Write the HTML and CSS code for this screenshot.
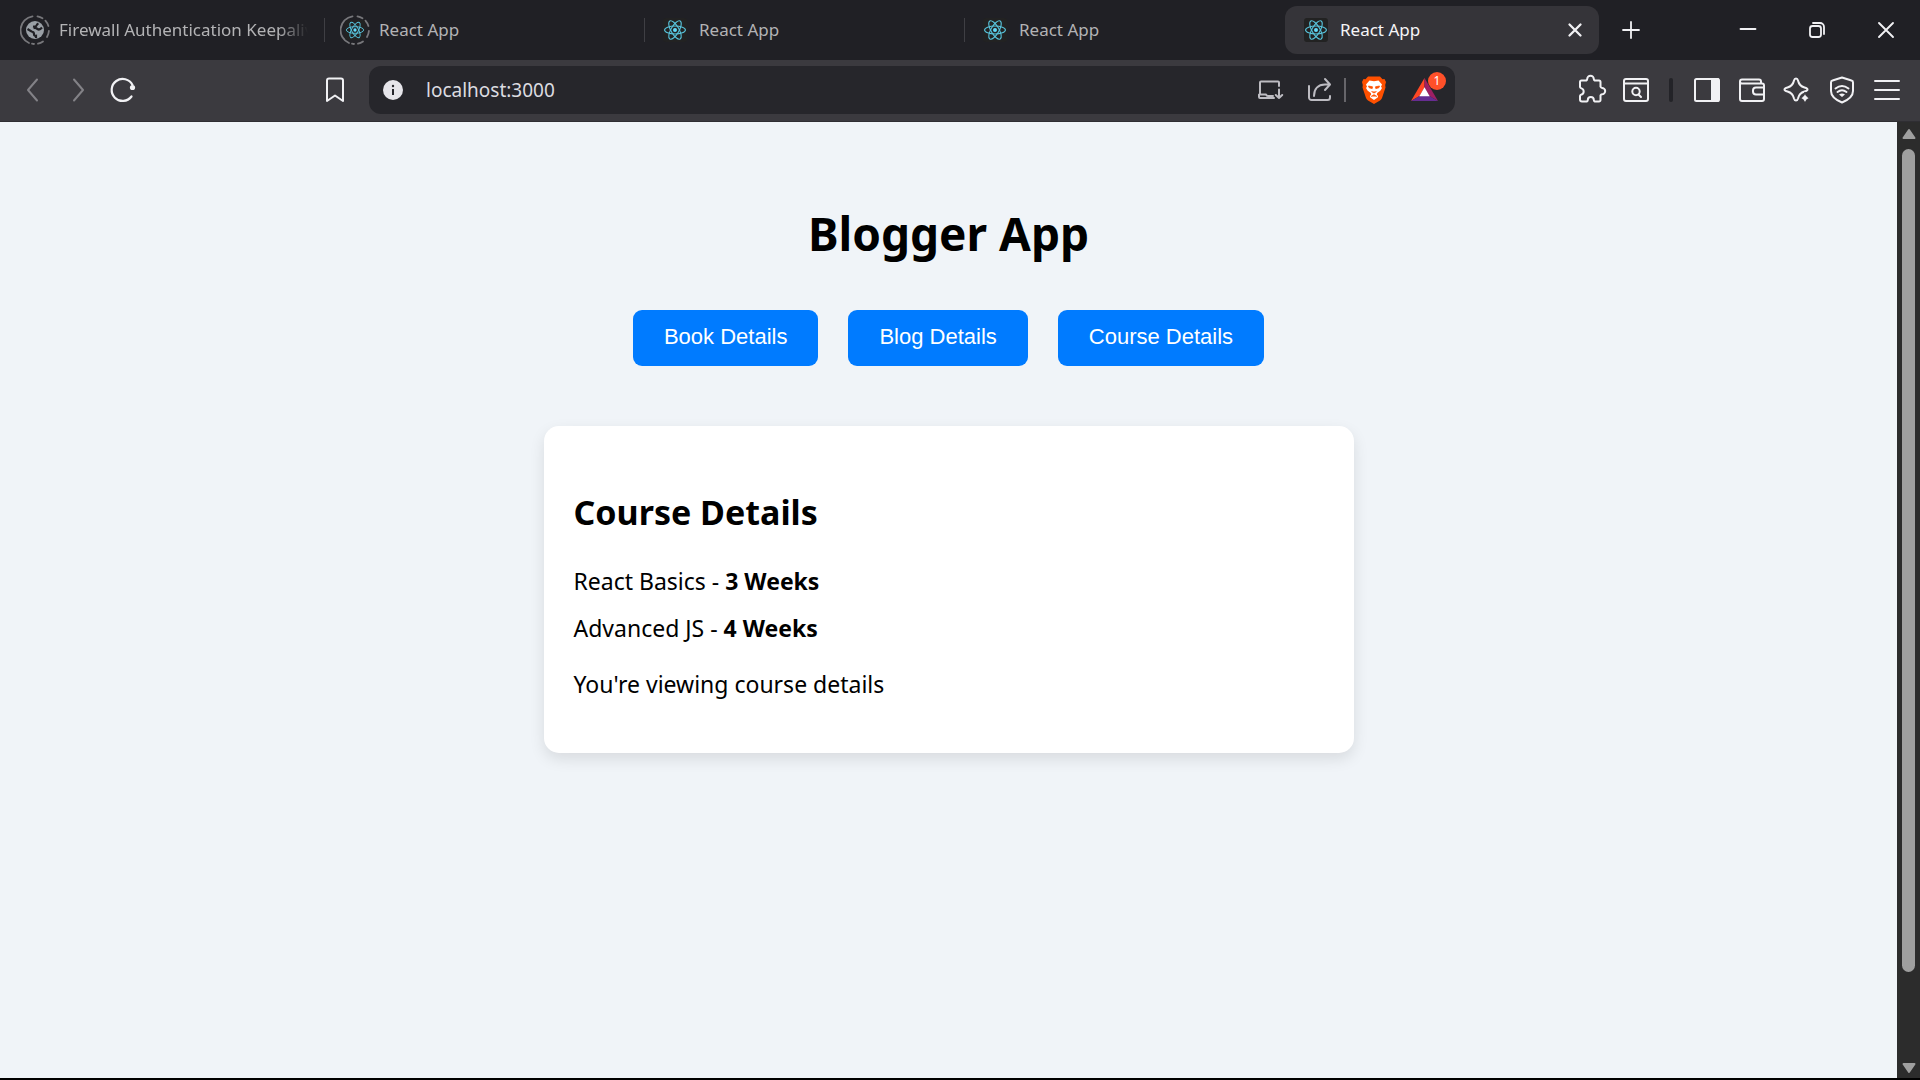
FILE: index.html
```html
<!DOCTYPE html>
<html lang="en">
<head>
<meta charset="utf-8">
<title>React App</title>
<link rel="stylesheet" href="styles.css">
</head>
<body>
<svg class="defs" aria-hidden="true">
  <symbol id="react" viewBox="0 0 24 24">
    <rect width="24" height="24" rx="3" fill="#222"/>
    <g fill="none" stroke="#58c4dc" stroke-width="1.1">
      <ellipse cx="12" cy="12" rx="10.4" ry="4"/>
      <ellipse cx="12" cy="12" rx="10.4" ry="4" transform="rotate(60 12 12)"/>
      <ellipse cx="12" cy="12" rx="10.4" ry="4" transform="rotate(120 12 12)"/>
    </g>
    <circle cx="12" cy="12" r="2" fill="#61dafb"/>
  </symbol>
  <symbol id="ring" viewBox="0 0 30 30">
    <g fill="none" stroke="#77777b" stroke-width="1.8" stroke-linecap="round">
      <path d="M12.5 1.3A14 14 0 0 0 9 28"/>
      <path d="M17.5 1.3A14 14 0 0 1 22.5 3.2"/>
      <path d="M25.4 5.6A14 14 0 0 1 28.4 11"/>
      <path d="M28.9 16A14 14 0 0 1 27 22"/>
      <path d="M23 26.5A14 14 0 0 1 18 28.7"/>
      <path d="M14 29A14 14 0 0 1 12 28.7"/>
    </g>
  </symbol>
</svg>

<div class="browser">
  <header class="tabs">
    <button class="tab" type="button">
      <svg class="fav" viewBox="0 0 30 30"><use href="#ring"/><circle cx="15" cy="15" r="9" fill="#9aa0a6"/><path d="M7.500 14l4 2.500q2.500.3 2.500 2.500t2 1.800v2.200M22 12.500q-2.500 3-4.500 1.500-2-1.500-4-.8M13 11.500q3 .5 3.500-1t2-2" fill="none" stroke="#202025" stroke-width="2.200"/></svg>
      <span class="tab-title fade">Firewall Authentication Keepalive</span>
    </button>
    <button class="tab" type="button">
      <svg class="fav" viewBox="0 0 30 30"><use href="#ring"/><use href="#react" x="5" y="5" width="20" height="20"/></svg>
      <span class="tab-title">React App</span>
    </button>
    <button class="tab" type="button">
      <svg class="fav" viewBox="0 0 30 30"><use href="#react" x="3" y="3" width="24" height="24"/></svg>
      <span class="tab-title">React App</span>
    </button>
    <button class="tab" type="button">
      <svg class="fav" viewBox="0 0 30 30"><use href="#react" x="3" y="3" width="24" height="24"/></svg>
      <span class="tab-title">React App</span>
    </button>
    <button class="tab active" type="button">
      <svg class="fav" viewBox="0 0 30 30"><use href="#react" x="3" y="3" width="24" height="24"/></svg>
      <span class="tab-title">React App</span>
      <svg class="ic" viewBox="0 0 24 24" stroke-width="2.300"><path d="M6.500 6.500l11 11M17.500 6.500l-11 11"/></svg>
    </button>
    <button class="new-tab" type="button" aria-label="New tab"><svg class="ic" viewBox="0 0 24 24" stroke-width="1.800"><path d="M12 4v16M4 12h16"/></svg></button>
    <div class="window-buttons">
      <button class="win" type="button" aria-label="Minimize"><svg class="ic" viewBox="0 0 24 24" stroke-width="1.800"><path d="M4.500 11h15"/></svg></button>
      <button class="win" type="button" aria-label="Restore"><svg class="ic" viewBox="0 0 24 24" stroke-width="1.800"><rect x="5" y="8" width="11" height="11" rx="2.500"/><path d="M8 5h7a4 4 0 0 1 4 4v7"/></svg></button>
      <button class="win" type="button" aria-label="Close"><svg class="ic" viewBox="0 0 24 24" stroke-width="1.900"><path d="M5 5l14 14M19 5L5 19"/></svg></button>
    </div>
  </header>

  <div class="toolbar">
    <div class="nav">
      <button class="tool dim" type="button" aria-label="Back"><svg class="ic big" viewBox="0 0 30 30"><path d="M19 4.500L10 15l9 10.500"/></svg></button>
      <button class="tool dim" type="button" aria-label="Forward"><svg class="ic big" viewBox="0 0 30 30"><path d="M11 4.500L20 15l-9 10.500"/></svg></button>
      <button class="tool" type="button" aria-label="Reload"><svg class="ic big" viewBox="0 0 30 30" stroke-width="2.200"><path d="M23.500 21.500A11 11 0 1 1 24.500 10"/><circle cx="24.500" cy="12.500" r="2.600" fill="#f1f1f4" stroke="none"/></svg></button>
      <button class="tool bookmark" type="button" aria-label="Bookmark"><svg class="ic big" viewBox="0 0 30 30"><path d="M7 26V5.500a2 2 0 0 1 2-2h12a2 2 0 0 1 2 2V26l-8-5.500z"/></svg></button>
    </div>

    <div class="address">
      <button class="info" type="button" aria-label="Site information"><svg viewBox="0 0 20 20" width="20" height="20"><circle cx="10" cy="10" r="10" fill="#e6e5ea"/><path d="M10 9v6" stroke="#26262b" stroke-width="2"/><circle cx="10" cy="6" r="1.200" fill="#26262b"/></svg></button>
      <input class="url" type="text" value="localhost:3000" aria-label="Address">
      <button class="addr-btn" type="button" aria-label="Install app"><svg class="ic soft" viewBox="0 0 24 24"><path d="M21 8V4.500a1 1 0 0 0-1-1H3a1 1 0 0 0-1 1V16M1 16.500h7q.5 1.500 2 1.500h5M1 16.500V19a1 1 0 0 0 1 1h14M21 11.500V20M17.800 17l3.200 3 3.200-3"/></svg></button>
      <button class="addr-btn share" type="button" aria-label="Share"><svg class="ic soft" viewBox="0 0 24 24"><path d="M1 8v11.500A2.500 2.500 0 0 0 3.500 22h16a2.500 2.500 0 0 0 2.500-2.500V18M6 18c0-7 4-11.500 11-11.500h4M17 1l5 5.500-5 5.500"/></svg></button>
      <span class="addr-sep"></span>
      <button class="addr-btn wide" type="button" aria-label="Brave Shields"><svg class="big" viewBox="0 0 30 30"><path d="M9 1.500h12l2.500 2.800 2-.2 1.500 3-.8 3 .3 2.400-3.500 10.500q-.5 1.500-2 2.400L15 29l-6-3.600q-1.500-.9-2-2.400L3.500 12.500l.3-2.400-.8-3 1.500-3 2 .2z" fill="#ff5000"/><path d="M10.500 5.500L15 6.300l4.500-.8 3.500 4-1 2.300 1 1.200-1.700 2.800-3.100 2.200-.3 1.700 1.200 1.300-.4 1.500L15 25l-3.700-2.500-.4-1.500 1.200-1.300-.3-1.700-3.100-2.200L7 13l1-1.200-1-2.300z" fill="#fff"/><path d="M9.500 11l4 .8-.3 1.800-3-.8zM20.500 11l-4 .8.3 1.800 3-.8zM12.500 16.500L15 18l2.500-1.500M12 21.500l3-1.800 3 1.800" fill="#ff5000" stroke="#ff5000" stroke-width=".8"/></svg></button>
      <button class="addr-btn wide rewards" type="button" aria-label="Rewards"><svg class="big" viewBox="0 0 30 30"><path d="M14.500 3L1 26l8.500-5 5-8.500z" fill="#ff4724"/><path d="M14.500 3L28 26l-8.500-5-5-8.500z" fill="#9e1f63"/><path d="M1 26h27l-8.500-5h-10z" fill="#662d91"/><path d="M14.500 12.300L9.300 21.200h10.400z" fill="#fff"/></svg><span class="badge">1</span></button>
    </div>

    <div class="tools">
      <button class="tool" type="button" aria-label="Extensions"><svg class="ic big" viewBox="0 0 30 30"><path d="M5.500 5.500h4.700q1-.5 1-1.500a3.300 3.300 0 0 1 6.600 0q0 1 1 1.500h4.200a1.500 1.500 0 0 1 1.500 1.500v4.700q.5 1.200 1.500 1.200a3.200 3.200 0 0 1 0 6.400q-1 0-1.500 1.200V25a1.500 1.500 0 0 1-1.500 1.500h-4.200q-1-.4-1-1.500a3 3 0 0 0-6 0q0 1.100-1 1.500H6A2 2 0 0 1 4 24.500V21q.3-1.200 1.500-1.400a3.300 3.300 0 0 0 0-6.200Q4.300 13 4 12V7a1.500 1.500 0 0 1 1.500-1.500z"/></svg></button>
      <button class="tool" type="button" aria-label="Search tabs"><svg class="ic big" viewBox="0 0 30 30"><rect x="3" y="4" width="24" height="22" rx="2"/><path d="M3 8.500h24M17.500 19.500l2.500 2.500"/><circle cx="15" cy="16.500" r="3.700"/></svg></button>
      <span class="tool-sep"></span>
      <button class="tool" type="button" aria-label="Sidebar"><svg class="ic big" viewBox="0 0 30 30"><rect x="3" y="4" width="24" height="22" rx="1.500"/><path d="M20 4h6v22h-6z" fill="#f1f1f4"/></svg></button>
      <button class="tool" type="button" aria-label="Wallet"><svg class="ic big" viewBox="0 0 30 30"><path d="M24 8.500V6.500a2 2 0 0 0-2-2H5a2 2 0 0 0 0 4h20a2 2 0 0 1 2 2V24a2 2 0 0 1-2 2H5a2 2 0 0 1-2-2V6.500M27 12.500h-8a3 3 0 0 0-3 3v1a3 3 0 0 0 3 3h8"/></svg></button>
      <button class="tool" type="button" aria-label="Leo AI"><svg class="ic big" viewBox="0 0 30 30"><path d="M14 3.500q1.500 0 2 2 1.200 5.500 6.500 7 3 .8 3 2t-3 2q-5.300 1.500-6.500 7-.5 2-2 2t-2-2q-1.200-5.500-6.500-7-3-.8-3-2t3-2q5.300-1.500 6.500-7 .5-2 2-2z"/><path d="M23 17.500q.8 4.700 5 5.500-4.200.8-5 5.500-.8-4.700-5-5.500 4.200-.8 5-5.500z" fill="#f1f1f4" stroke="#3b3a3f" stroke-width="1"/></svg></button>
      <button class="tool" type="button" aria-label="VPN"><svg class="ic big" viewBox="0 0 30 30"><path d="M15 2.500l9.500 3a2 2 0 0 1 1.500 2v8.500q0 7-11 11.500Q4 23 4 16V7.500a2 2 0 0 1 1.500-2z"/><path d="M8.500 13.500q6.500-5 13 0M10.500 17q4.500-3.500 9 0"/><path d="M12 19.500q3-2 6 0l-3 2.500z" fill="#f1f1f4" stroke="none"/></svg></button>
      <button class="tool" type="button" aria-label="Menu"><svg class="ic big" viewBox="0 0 30 30"><path d="M3 6h24M3 15h24M3 24h24"/></svg></button>
    </div>
  </div>

  <div class="viewport">
    <main class="page">
      <h1>Blogger App</h1>
      <div class="actions">
        <button class="action" type="button">Book Details</button>
        <button class="action" type="button">Blog Details</button>
        <button class="action" type="button">Course Details</button>
      </div>
      <section class="card">
        <h2>Course Details</h2>
        <p>React Basics - <strong>3 Weeks</strong></p>
        <p>Advanced JS - <strong>4 Weeks</strong></p>
        <p class="note">You're viewing course details</p>
      </section>
    </main>
    <div class="scrollbar" aria-hidden="true">
      <svg width="14" height="12" viewBox="0 0 14 12"><path d="M7 2L12.500 10h-11z" fill="#9f9f9f" stroke="#9f9f9f" stroke-width="2" stroke-linejoin="round"/></svg>
      <div class="track"><div class="thumb"></div></div>
      <svg width="14" height="12" viewBox="0 0 14 12"><path d="M7 10L1.500 2h11z" fill="#9f9f9f" stroke="#9f9f9f" stroke-width="2" stroke-linejoin="round"/></svg>
    </div>
  </div>
</div>
</body>
</html>
```

FILE: styles.css
```css
* { box-sizing: border-box; }

body {
  margin: 0;
  font-family: "Noto Sans", "Open Sans", sans-serif;
  color: #000;
}

button {
  border: 0;
  padding: 0;
  background: none;
  color: inherit;
  font: inherit;
}

.defs {
  position: absolute;
  width: 0;
  height: 0;
}

.browser {
  display: flex;
  flex-direction: column;
  min-height: 100vh;
  background: #3b3a3f;
  border-bottom: 2px solid #000;
}

/* Icons */
.ic {
  width: 24px;
  height: 24px;
  flex: none;
  fill: none;
  stroke: #f1f1f4;
  stroke-linecap: round;
  stroke-linejoin: round;
  overflow: visible;
}
.ic:not([stroke-width]) { stroke-width: 2; }
.big { width: 30px; height: 30px; }
.soft { stroke: #bdbcc2; }
.dim .ic { stroke: #838287; }

/* Tab strip */
.tabs {
  display: flex;
  align-items: center;
  height: 60px;
  padding-left: 4px;
  background: #202025;
}
.tab {
  display: flex;
  align-items: center;
  flex: 0 1 320px;
  min-width: 0;
  height: 48px;
  padding: 0 16px;
  gap: 9px;
  font-size: 17px;
  color: #b3b3b5;
  text-align: left;
}
.tab + .tab:not(.active) {
  background: linear-gradient(#3f3f44, #3f3f44) left center / 1px 24px no-repeat;
}
.tab.active {
  flex-basis: 314px;
  margin-left: 1px;
  padding-right: 12px;
  border-radius: 12px;
  background: #353439;
  color: #f5f5f7;
}
.fav { width: 30px; height: 30px; flex: none; }
.tab-title {
  flex: 1;
  padding-bottom: 2px;
  overflow: hidden;
  white-space: nowrap;
}
.fade { -webkit-mask-image: linear-gradient(90deg, #000 88%, transparent); mask-image: linear-gradient(90deg, #000 88%, transparent); }
.new-tab {
  display: grid;
  place-items: center;
  width: 48px;
  height: 48px;
  margin-left: 8px;
}
.window-buttons {
  display: flex;
  margin-left: auto;
}
.win {
  display: grid;
  place-items: center;
  width: 69px;
  height: 60px;
}

/* Toolbar */
.toolbar {
  display: grid;
  grid-template-columns: 359px minmax(0, 1fr) 454px;
  align-items: center;
  height: 62px;
  padding: 0 11px 2px 10px;
  border-bottom: 1px solid #2f2e33;
}
.nav, .tools { display: flex; align-items: center; }
.nav { padding-right: 12px; }
.tools { justify-content: flex-end; }
.tool {
  display: grid;
  place-items: center;
  width: 45px;
  height: 45px;
}
.bookmark { margin-left: auto; }
.tool-sep {
  width: 4px;
  height: 24px;
  margin: 0 11px;
  border-radius: 2px;
  background: #232328;
}
.address {
  display: flex;
  align-items: center;
  height: 48px;
  padding: 0 5px 0 10px;
  border-radius: 12px;
  background: #26262b;
}
.info {
  display: grid;
  place-items: center;
  width: 28px;
  height: 28px;
}
.url {
  flex: 1;
  min-width: 0;
  height: 48px;
  margin-left: 19px;
  padding: 0;
  border: 0;
  outline: 0;
  background: none;
  color: #dcdce0;
  font: inherit;
  font-size: 19px;
}
.addr-btn {
  display: grid;
  place-items: center;
  width: 48px;
  height: 48px;
}
.addr-btn.wide { width: 51px; }
.share { padding-left: 4px; }
.addr-sep {
  width: 2px;
  height: 24px;
  margin: 0 2px;
  background: #66656a;
}
.rewards { position: relative; }
.badge {
  position: absolute;
  top: 6px;
  right: 4px;
  width: 18px;
  height: 18px;
  border-radius: 9px;
  background: #ff5029;
  color: #fff;
  font-size: 12px;
  line-height: 18px;
}

/* Web page */
.viewport {
  display: flex;
  flex: 1;
}
.page {
  flex: 1;
  padding: 80px 30px;
  background: #f0f4f8;
}
h1 {
  margin: 0 0 46px;
  font-size: 46px;
  line-height: 62px;
  text-align: center;
}
.actions {
  display: flex;
  flex-wrap: wrap;
  justify-content: center;
  gap: 30px;
  margin-bottom: 60px;
}
.action {
  height: 56px;
  padding: 0 31px 2px;
  border-radius: 9px;
  background: #007bff;
  color: #fff;
  font-family: "Liberation Sans", Arial, sans-serif;
  font-size: 22px;
}
.card {
  max-width: 810px;
  margin: 0 auto;
  padding: 62px 30px 53px;
  border-radius: 15px;
  background: #fff;
  box-shadow: 0 6px 15px rgba(0, 0, 0, 0.1);
  font-size: 23px;
  line-height: 32px;
}
h2 {
  margin: 0 0 29px;
  font-size: 34px;
  line-height: 48px;
}
.card p { margin: 0 0 15px; }
.card .note { margin: 24px 0 0; }

/* Scrollbar */
.scrollbar {
  display: flex;
  flex-direction: column;
  align-items: center;
  width: 23px;
  padding: 6px 0 4px;
  gap: 9px;
  background: #2c2c2c;
}
.track { flex: 1; }
.thumb {
  width: 13px;
  height: 91%;
  border-radius: 7px;
  background: #9f9f9f;
}
```
